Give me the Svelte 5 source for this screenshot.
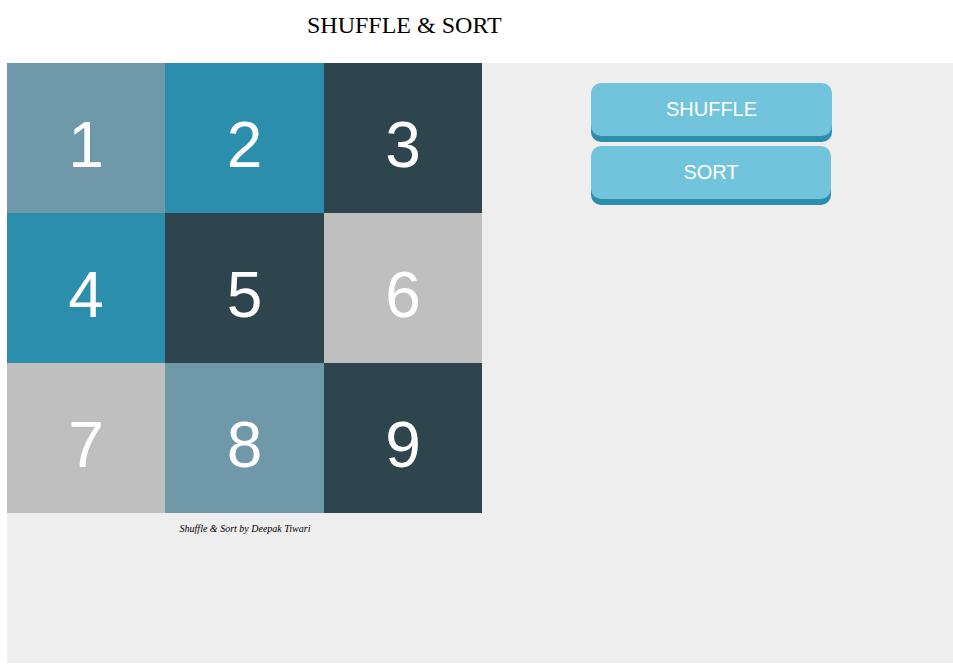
<script>
  const tiles = [
    { n: 1, tone: 'slate' }, { n: 2, tone: 'blue' }, { n: 3, tone: 'dark' },
    { n: 4, tone: 'blue' }, { n: 5, tone: 'dark' }, { n: 6, tone: 'grey' },
    { n: 7, tone: 'grey' }, { n: 8, tone: 'slate' }, { n: 9, tone: 'dark' }
  ];
  let cards = $state([...tiles]);
  function shuffle() {
    cards = [...cards].sort(() => Math.random() - 0.5);
  }
  function sort() {
    cards = [...tiles];
  }
</script>

<header>SHUFFLE &amp; SORT</header>
<main>
  <section class="left">
    <div class="board">
      {#each cards as card (card.n)}
        <div class="tile {card.tone}">{card.n}</div>
      {/each}
    </div>
    <footer>Shuffle &amp; Sort by Deepak Tiwari</footer>
  </section>
  <section class="actions">
    <button class="wide" onclick={shuffle}>SHUFFLE</button>
    <button onclick={sort}>SORT</button>
  </section>
</main>

<style>
  :global(body) { background: #fff; overflow: hidden; }
  header {
    height: 63px;
    box-sizing: border-box;
    padding: 11px 0 0 307px;
    font: 24px/28px "Liberation Serif", "Times New Roman", serif;
    color: #000;
  }
  main {
    display: flex;
    height: 600px;
    margin-left: 7px;
    background: #eee;
  }
  .left { width: 475px; }
  .board {
    display: grid;
    grid-template-columns: 158px 159px 158px;
    grid-auto-rows: 150px;
  }
  .tile {
    display: flex;
    align-items: center;
    justify-content: center;
    padding-top: 14px;
    box-sizing: border-box;
    color: #fff;
    font: 64px/74px "Liberation Sans", Arial, sans-serif;
  }
  .slate { background: #6f98a8; }
  .blue { background: #2b8ead; }
  .dark { background: #2f454e; }
  .grey { background: #bfbfbf; }
  footer {
    padding: 10px 0 0 1px;
    text-align: center;
    font: italic 10px/12px "Liberation Serif", "Times New Roman", serif;
  }
  .actions {
    display: flex;
    flex-direction: column;
    align-items: flex-start;
    gap: 10px;
    padding: 20px 0 0 109px;
  }
  button {
    width: 240px;
    height: 53px;
    padding: 0;
    border: 0;
    border-radius: 10px;
    background: #72c3dc;
    box-shadow: 0 6px 0 #2b8ead;
    color: #fff;
    font: 20px "Liberation Sans", Arial, sans-serif;
    cursor: pointer;
  }
  .wide { width: 241px; }
</style>
